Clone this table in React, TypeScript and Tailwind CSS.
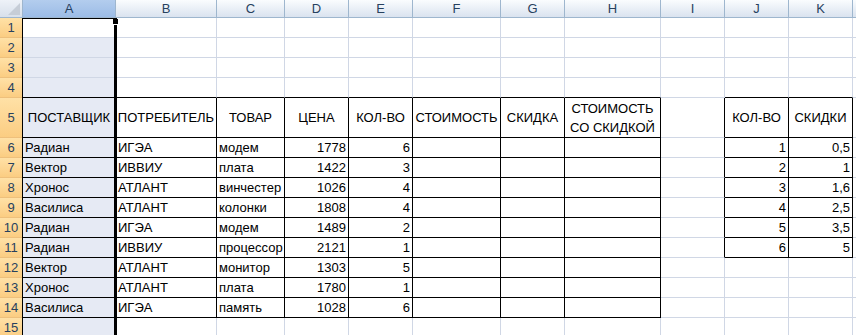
import React from 'react';

const LETTERS = ['A', 'B', 'C', 'D', 'E', 'F', 'G', 'H', 'I', 'J', 'K', 'L'];

const HEADINGS: Record<number, string> = {
  0: 'ПОСТАВЩИК',
  1: 'ПОТРЕБИТЕЛЬ',
  2: 'ТОВАР',
  3: 'ЦЕНА',
  4: 'КОЛ-ВО',
  5: 'СТОИМОСТЬ',
  6: 'СКИДКА',
  7: 'СТОИМОСТЬ СО СКИДКОЙ',
  9: 'КОЛ-ВО',
  10: 'СКИДКИ',
};

const SUPPLIES: [string, string, string, number, number][] = [
  ['Радиан', 'ИГЭА', 'модем', 1778, 6],
  ['Вектор', 'ИВВИУ', 'плата', 1422, 3],
  ['Хронос', 'АТЛАНТ', 'винчестер', 1026, 4],
  ['Василиса', 'АТЛАНТ', 'колонки', 1808, 4],
  ['Радиан', 'ИГЭА', 'модем', 1489, 2],
  ['Радиан', 'ИВВИУ', 'процессор', 2121, 1],
  ['Вектор', 'АТЛАНТ', 'монитор', 1303, 5],
  ['Хронос', 'АТЛАНТ', 'плата', 1780, 1],
  ['Василиса', 'ИГЭА', 'память', 1028, 6],
];

const DISCOUNTS: [number, string][] = [
  [1, '0,5'],
  [2, '1'],
  [3, '1,6'],
  [4, '2,5'],
  [5, '3,5'],
  [6, '5'],
];

type Align = 'left' | 'right' | 'center';
type Value = { text: string; align: Align } | null;

const ROWS = Array.from({ length: 15 }, (_, i) => i + 1);

// bordered ranges: A5:H14 and J5:K11
function inTable(r: number, c: number) {
  return (r >= 5 && r <= 14 && c >= 0 && c <= 7) || (r >= 5 && r <= 11 && (c === 9 || c === 10));
}

function valueAt(r: number, c: number): Value {
  if (r === 5 && HEADINGS[c]) return { text: HEADINGS[c], align: 'center' };
  if (r >= 6 && r <= 14 && c <= 4) {
    const v = SUPPLIES[r - 6][c];
    return { text: String(v), align: typeof v === 'number' ? 'right' : 'left' };
  }
  if (r >= 6 && r <= 11 && (c === 9 || c === 10)) {
    return { text: String(DISCOUNTS[r - 6][c - 9]), align: 'right' };
  }
  return null;
}

function Cell({ r, c }: { r: number; c: number }) {
  const v = valueAt(r, c);
  const right = inTable(r, c) || inTable(r, c + 1) ? 'border-r-black' : 'border-r-[#d0d7e5]';
  const bottom = inTable(r, c) || inTable(r + 1, c) ? 'border-b-black' : 'border-b-[#d0d7e5]';
  const fill = c === 0 && r !== 1 ? 'bg-[#e6eaf4]' : 'bg-white';
  const align =
    v?.align === 'right' ? 'justify-end' : v?.align === 'center' ? 'justify-center text-center' : 'justify-start';
  const wrap = r === 5 && c === 7 ? 'whitespace-normal leading-[19px]' : 'whitespace-nowrap leading-[20px]';

  return (
    <div
      className={`flex items-center overflow-hidden border-r border-b px-[2px] text-black ${right} ${bottom} ${fill} ${align} ${wrap}`}
    >
      {v ? v.text : null}
    </div>
  );
}

export default function App() {
  return (
    <div className="relative h-[335px] w-[856px] overflow-hidden bg-white font-['Liberation_Sans',Arial,sans-serif] text-[13px]">
      <div className="grid grid-cols-[23px_93px_101px_68px_64px_64px_88px_64px_96px_64px_64px_64px_1fr] grid-rows-[18px_20px_20px_20px_20px_40px_repeat(10,20px)]">
        {/* corner */}
        <div className="relative border-r border-b border-r-[#9eb6ce] border-b-[#9eb6ce] bg-linear-to-b from-[#eef2f8] to-[#d8e0eb]">
          <svg className="absolute right-[2px] bottom-[2px]" width="12" height="12" viewBox="0 0 12 12">
            <polygon points="12,0 12,12 0,12" fill="#c6cdd7" />
          </svg>
        </div>

        {/* column letters */}
        {LETTERS.map((l, i) => (
          <div
            key={l}
            className={`flex items-center justify-center border-r border-b border-r-[#9eb6ce] border-b-[#9eb6ce] text-[#27415f] ${
              i === 0 ? 'bg-linear-to-b from-[#b3cdee] to-[#9cbce6]' : 'bg-linear-to-b from-[#fafcfe] to-[#dae3ef]'
            }`}
          >
            {i < 11 ? l : null}
          </div>
        ))}

        {ROWS.map((r) => (
          <React.Fragment key={r}>
            <div className="flex items-center justify-center border-r border-b border-r-[#f0a848] border-b-[#eec07c] bg-linear-to-b from-[#ffe1a6] to-[#fbcd82] text-[#27415f]">
              {r}
            </div>
            {LETTERS.map((_, c) => (
              <Cell key={c} r={r} c={c} />
            ))}
          </React.Fragment>
        ))}
      </div>

      {/* column A selection outline */}
      <div className="pointer-events-none absolute top-[18px] left-[22px] h-[330px] w-[95px] border-t border-l border-r-[3px] border-black" />
      <div className="pointer-events-none absolute top-[19px] left-[113px] h-[5px] w-[5px] bg-black" />
      <div className="pointer-events-none absolute top-[24px] left-[114px] h-[1px] w-[3px] bg-white" />
    </div>
  );
}
